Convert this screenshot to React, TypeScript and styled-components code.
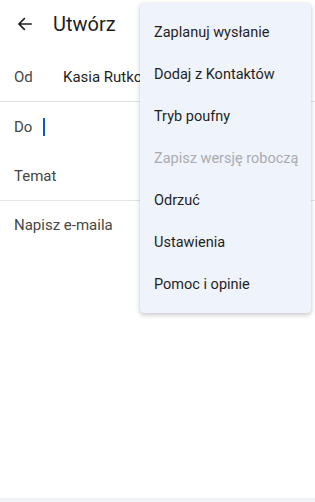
import React from "react";
import styled, { createGlobalStyle } from "styled-components";

const Global = createGlobalStyle`
  html, body { margin: 0; padding: 0; background: #ffffff; }
  body { font-family: Roboto, "Noto Sans", Arial, sans-serif; color: #1f1f1f; }
  * { box-sizing: border-box; }
`;

const Screen = styled.div`
  position: relative;
  width: 315px;
  height: 502px;
  overflow: hidden;
  background: #ffffff;
  display: flex;
  flex-direction: column;
`;

const Header = styled.div`
  height: 48px;
  display: flex;
  align-items: center;
  padding-left: 16px;
  gap: 19px;
`;

const Title = styled.div`
  font-size: 20px;
  color: #1f1f1f;
`;

const Row = styled.div<{ $h: number; $top?: number }>`
  height: ${(p) => p.$h}px;
  padding-top: ${(p) => p.$top ?? 0}px;
  display: flex;
  align-items: center;
  padding-left: 14px;
  font-size: 15px;
  white-space: nowrap;
`;

const Label = styled.span<{ $w?: number }>`
  color: #444746;
  width: ${(p) => (p.$w ? `${p.$w}px` : "auto")};
`;

const Value = styled.span`
  color: #1f1f1f;
`;

const Cursor = styled.span`
  display: inline-block;
  width: 2px;
  height: 18px;
  background: #0b57d0;
  margin-left: 11px;
`;

const Divider = styled.div`
  height: 1px;
  background: #e3e3e3;
`;

const Spacer = styled.div`
  flex: 1;
`;

const BottomBar = styled.div`
  height: 4px;
  background: #f0f2f5;
`;

const Menu = styled.div`
  position: absolute;
  left: 140px;
  top: 3px;
  width: 171px;
  padding: 8px 0;
  background: #eff3fb;
  border-radius: 4px;
  box-shadow: 0 2px 5px rgba(0, 0, 0, 0.22), 0 0 1px rgba(0, 0, 0, 0.12);
  display: flex;
  flex-direction: column;
`;

const MenuItem = styled.div<{ $disabled?: boolean }>`
  height: 42px;
  display: flex;
  align-items: center;
  padding-left: 14px;
  font-size: 14.5px;
  white-space: nowrap;
  color: ${(p) => (p.$disabled ? "#a9acb0" : "#1f1f1f")};
`;

const BackArrow = () => (
  <svg width="18" height="18" viewBox="0 0 24 24" fill="none">
    <path d="M20 12H5M11 5l-7 7 7 7" stroke="#1f1f1f" strokeWidth="2.2" strokeLinecap="square" />
  </svg>
);

const items: { label: string; disabled?: boolean }[] = [
  { label: "Zaplanuj wysłanie" },
  { label: "Dodaj z Kontaktów" },
  { label: "Tryb poufny" },
  { label: "Zapisz wersję roboczą", disabled: true },
  { label: "Odrzuć" },
  { label: "Ustawienia" },
  { label: "Pomoc i opinie" },
];

export default function App() {
  return (
    <>
      <Global />
      <Screen>
        <Header>
          <BackArrow />
          <Title>Utwórz</Title>
        </Header>
        <Row $h={53} $top={5}>
          <Label $w={49}>Od</Label>
          <Value>Kasia Rutkowska</Value>
        </Row>
        <Divider />
        <Row $h={50}>
          <Label>Do</Label>
          <Cursor />
        </Row>
        <Row $h={48}>
          <Label>Temat</Label>
        </Row>
        <Divider />
        <Row $h={47}>
          <Label>Napisz e-maila</Label>
        </Row>
        <Spacer />
        <BottomBar />
        <Menu>
          {items.map((it) => (
            <MenuItem key={it.label} $disabled={it.disabled}>
              {it.label}
            </MenuItem>
          ))}
        </Menu>
      </Screen>
    </>
  );
}
